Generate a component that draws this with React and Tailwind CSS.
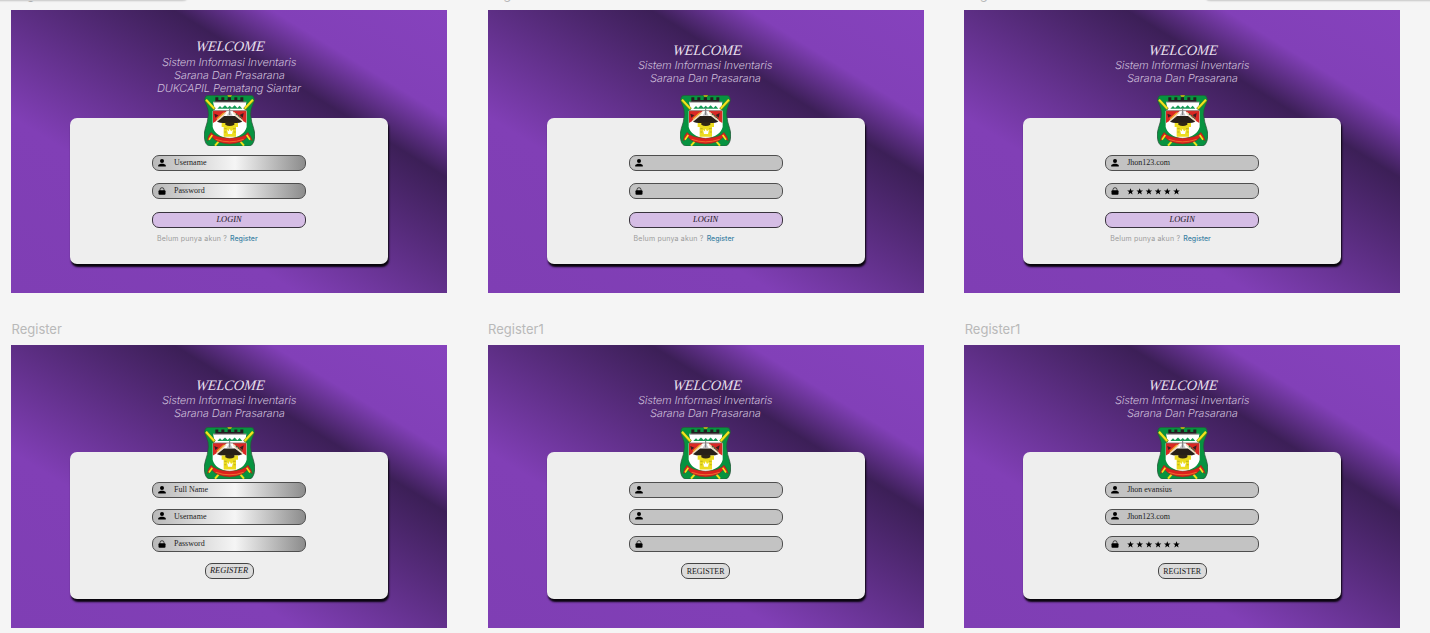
import React from "react";

function Emblem({ className }) {
  return (
    <svg viewBox="0 0 153 153" preserveAspectRatio="none" className={className}>
      <path
        d="M12 1H141Q150 2 151 12Q152 20 146 30Q139 44 140 60Q142 82 149 100Q156 120 150 138Q146 152 136 153H18Q7 152 3 138Q-3 120 4 100Q11 82 13 60Q14 44 7 30Q1 20 2 12Q3 2 12 1Z"
        fill="#079340"
        stroke="#2f4a3a"
        strokeWidth="2"
      />
      <path d="M34 7h9v8h9V7h9v8h10V7h10v8h10V7h9v8h9V7h9v14H34z" fill="#241c20" />
      <path d="M70 1h14l-3 4h-8z" fill="#d8b80e" />
      <path d="M27 20H127L124 44L128 48V96Q121 124 77 131Q33 124 26 96V48L32 44Z" fill="#fff" />
      <path d="M28 21H126" stroke="#3a3434" strokeWidth="2" />
      <path d="M40 41l8-8 6 6 9-8 8 7 6-6 7 6 8-7 8 8 7-7 8 9z" fill="#149a55" />
      <path d="M27 47H68Q60 66 27 84ZM127 47H86Q94 66 127 84Z" fill="#da2824" />
      <path d="M27 47H127" stroke="#84716d" strokeWidth="2.5" />
      <path d="M38 78L66 52M116 78L88 52" stroke="#f2dfbd" strokeWidth="5" />
      <path d="M39 72L60 53" stroke="#f0a82a" strokeWidth="4" />
      <path d="M96 56L114 71" stroke="#386a43" strokeWidth="4" strokeDasharray="5 2" />
      <path d="M31 56l12 5-9 7zM119 54l-12 6 9 8z" fill="#3b2020" />
      <path d="M68 62L77 46L86 62Z" fill="#c9c9cb" />
      <path d="M77 40V60" stroke="#77787b" strokeWidth="3" />
      <path d="M60 63H93L115 80Q105 84 98 84H56Q49 84 39 80Z" fill="#272018" />
      <path d="M53 84H102V96H96V125H59V96H53Z" fill="#ecdc1f" />
      <path d="M64 82H91V89Q77 97 64 89Z" fill="#302715" />
      <path d="M61 101H68M87 101H95M61 111H67M89 111H95" stroke="#8c851b" strokeWidth="1.5" />
      <path d="M69 104l5 5 3-8 4 8 6-5-3 13H72z" fill="#fff" />
      <path d="M6 15L32 43M147 15L121 43" stroke="#77851c" strokeWidth="9" />
      <path d="M6 14L31 41M147 14L122 41" stroke="#f3e81c" strokeWidth="6" />
      <path d="M33 152L47 136M120 152L106 136" stroke="#eee31c" strokeWidth="6" />
      <path
        d="M13 124L21 112Q33 128 77 130Q121 128 132 112L140 124L145 137Q132 131 130 126Q114 145 77 147Q39 145 23 126Q21 132 10 137Z"
        fill="#dc211d"
        stroke="#70411e"
        strokeWidth="1.5"
      />
      <path d="M35 133Q77 148 119 133" fill="none" stroke="#ee6a2c" strokeWidth="3" />
      <path d="M15 134L25 120M138 134L128 120" stroke="#f3e81c" strokeWidth="5" />
    </svg>
  );
}

function UserIcon() {
  return (
    <svg viewBox="0 0 8 8" className="block h-2 w-2 shrink-0" fill="#000">
      <circle cx="4" cy="2.1" r="2" />
      <path d="M0.2 7.4V6.6C.2 5.2 2.6 4.7 4 4.7s3.8.5 3.8 1.9v.8z" />
    </svg>
  );
}

function LockIcon() {
  return (
    <svg viewBox="0 0 8 8" className="block h-2 w-2 shrink-0">
      <path d="M2 3.8V2.6a2 1.9 0 0 1 4 0v1.2" fill="none" stroke="#222" strokeWidth=".8" />
      <rect x=".5" y="3.2" width="7" height="4.5" rx="1" fill="#000" />
    </svg>
  );
}

function Stars() {
  return (
    <svg viewBox="0 0 54 7" className="h-[7px] w-[54px]" fill="#000">
      {[0, 1, 2, 3, 4, 5].map((i) => (
        <path
          key={i}
          transform={`translate(${i * 9.2} 0)`}
          d="M3.5 .2L4.4 2.5L6.8 2.6L4.9 4.1L5.6 6.5L3.5 5.1L1.4 6.5L2.1 4.1L.2 2.6L2.6 2.5Z"
        />
      ))}
    </svg>
  );
}

function Field({ lock, value, gradient, raised }) {
  return (
    <div
      className={`flex h-[16px] w-[154px] shrink-0 items-center gap-2 rounded-[7px] border border-[#4e4e4e] pl-[5px] ${
        gradient ? "bg-[linear-gradient(90deg,#b9b9b9_0%,#f5f5f5_54%,#8c8c8c_100%)]" : "bg-[#c3c3c3]"
      }`}
    >
      <span className={raised ? "-mt-[2px]" : ""}>{lock ? <LockIcon /> : <UserIcon />}</span>
      {value === "stars" ? (
        <Stars />
      ) : (
        <span className="font-['Liberation_Serif',serif] text-[8px] leading-[14px] whitespace-nowrap text-[#1c1c1c]">
          {value}
        </span>
      )}
    </div>
  );
}

function Board({ label, login, office, gradient, values, italicButton }) {
  return (
    <section className="w-[436px] shrink-0">
      <div className="flex h-[52px] items-end pb-[7px] pl-[0.5px] font-['Inter',sans-serif] text-[13px] leading-[18px] text-[#b9b9b9]">
        {label}
      </div>
      <div className="flex h-[283px] flex-col items-center bg-[linear-gradient(31.5deg,#7f3eb4_0%,#813fb6_32%,#3c1f57_69.5%,#8240b8_80.5%,#8642bd_100%)]">
        <header
          className={`flex shrink-0 flex-col items-center font-['Inter',sans-serif] text-[11px] leading-[13.3px] font-light tracking-[-0.12px] text-[#cbbcd8] ${
            login ? "h-[85px]" : "h-[82px]"
          } ${office ? "pt-[28px]" : "pt-[31.5px]"}`}
        >
          <h1 className="mb-[1.5px] -skew-x-6 pl-[3px] font-['Liberation_Serif',serif] text-[14.5px] leading-4 font-normal tracking-[-0.2px] text-[#e6dfec] italic">
            WELCOME
          </h1>
          <p className="-skew-x-10">Sistem Informasi Inventaris</p>
          <p className="-skew-x-10">Sarana Dan Prasarana</p>
          {office && <p className="-skew-x-10">DUKCAPIL Pematang Siantar</p>}
        </header>
        <Emblem className={`relative z-10 w-[51px] shrink-0 ${login ? "-mb-[28px] h-[51px]" : "-mb-[27px] h-[52px]"}`} />
        <div
          className={`flex w-[318px] shrink-0 flex-col items-center rounded-[7px] bg-[#eeeeee] shadow-[1px_3px_2px_#08040c] ${
            login ? "h-[146px] gap-[12.4px] pt-[37px]" : "h-[147px] gap-[11px] pt-[30px]"
          }`}
        >
          {values.map((value, i) => (
            <Field
              key={i}
              value={value}
              gradient={gradient}
              lock={i === values.length - 1}
              raised={!login && i === 1}
            />
          ))}
          {login ? (
            <div className="flex flex-col">
              <div className="flex h-[16px] w-[154px] items-center justify-center rounded-[7px] border-[1.5px] border-[#38323c] bg-[#d5bde5] pt-px font-['Liberation_Serif',serif] text-[8.4px] leading-none text-[#17121a] italic">
                LOGIN
              </div>
              <p className="mt-[6.7px] flex gap-[3px] pl-[5px] font-['Inter',sans-serif] text-[7px] leading-[10px] whitespace-nowrap text-[#9b9b9b]">
                <span className="tracking-[0.2px]">Belum punya akun ?</span>
                <span className="font-medium text-[#3d83a5]">Register</span>
              </p>
            </div>
          ) : (
            <div
              className={`flex h-[16px] w-[49px] items-center justify-center rounded-[7px] border-[1.5px] border-[#444] bg-[#dcdcdc] pt-px font-['Liberation_Serif',serif] leading-none text-[#171717] ${
                italicButton ? "text-[8.4px] italic" : "text-[7.9px]"
              }`}
            >
              REGISTER
            </div>
          )}
        </div>
      </div>
    </section>
  );
}

export default function App() {
  return (
    <main className="relative h-[633px] w-[1430px] overflow-hidden bg-[#f5f5f5]">
      <div className="-mt-[42px] flex flex-col pl-[11px]">
        <div className="flex gap-[40.6px]">
          <Board label="Login" login office gradient values={["Username", "Password"]} />
          <Board label="Login1" login values={["", ""]} />
          <Board label="Login1" login values={["Jhon123.com", "stars"]} />
        </div>
        <div className="flex gap-[40.6px]">
          <Board label="Register" gradient italicButton values={["Full Name", "Username", "Password"]} />
          <Board label="Register1" values={["", "", ""]} />
          <Board label="Register1" values={["Jhon evansius", "Jhon123.com", "stars"]} />
        </div>
      </div>
      <div className="absolute -top-5 -left-3 h-[21px] w-[202px] rounded-lg border-b border-[#d2d2d2] bg-white shadow-[0_0_2px_#0003]" />
      <div className="absolute -top-5 left-[1203px] h-[21px] w-[240px] rounded-lg border-b border-[#d2d2d2] bg-white shadow-[0_0_2px_#0003]" />
    </main>
  );
}
